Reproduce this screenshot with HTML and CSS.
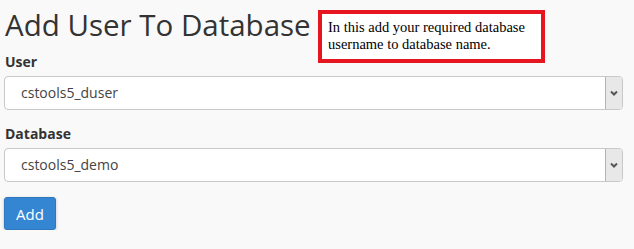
FILE: index.html
```html
<!DOCTYPE html>
<html lang="en">
<head>
  <meta charset="UTF-8">
  <title>Add User To Database</title>
  <link rel="stylesheet" href="styles.css">
</head>
<body>

  <!-- page body -->
  <div class="page">
    <h1>Add User To Database</h1>

    <!-- annotation over the screenshot -->
    <div class="note">
      In this add your required database<br>
      username to database name.
    </div>

    <label class="field-label">User</label>
    <div class="select">
      <span class="select-value">cstools5_duser</span>
      <span class="select-btn">
        <svg width="8" height="6" viewBox="0 0 8 6"><path d="M1 1.5 L4 4.5 L7 1.5" fill="none" stroke="#555" stroke-width="2"/></svg>
      </span>
    </div>

    <label class="field-label">Database</label>
    <div class="select">
      <span class="select-value">cstools5_demo</span>
      <span class="select-btn">
        <svg width="8" height="6" viewBox="0 0 8 6"><path d="M1 1.5 L4 4.5 L7 1.5" fill="none" stroke="#555" stroke-width="2"/></svg>
      </span>
    </div>

    <button class="btn-add">Add</button>
  </div>

</body>
</html>
```

FILE: styles.css
```css
body {
  margin: 0;
  background-color: #f9f9f9;
  font-family: "Open Sans", sans-serif;
  color: #333;
}

.page {
  position: relative;
  padding: 4px 11px 0 4px;
}

h1 {
  margin: 0;
  font-size: 29.5px;
  font-weight: normal;
  line-height: 42px;
  padding-left: 1px;
}

/* red annotation box */
.note {
  position: absolute;
  left: 318px;
  top: 10px;
  padding: 5px 16px 6px 6px;
  border: 4px solid #e5161f;
  background-color: #fff;
  font-family: "Liberation Serif", serif;
  font-size: 14.5px;
  line-height: 17px;
  white-space: nowrap;
  color: #000;
}

.field-label {
  display: block;
  font-size: 14px;
  font-weight: bold;
  line-height: 20px;
  margin: 6px 0 4px 1px;
}

.select + .field-label {
  margin-top: 14px;
}

.select {
  display: flex;
  height: 34px;
  box-sizing: border-box;
  border: 1px solid #c8c8c8;
  border-radius: 4px;
  background-color: #fff;
}

.select-value {
  flex: 1;
  padding-left: 16px;
  font-size: 14px;
  line-height: 32px;
  color: #444;
}

.select-btn {
  width: 16px;
  display: flex;
  align-items: center;
  justify-content: center;
  background-color: #e8e8e8;
  border-left: 1px solid #b4b4b4;
  border-radius: 0 3px 3px 0;
}

.btn-add {
  margin-top: 15px;
  width: 52px;
  height: 33px;
  border: 1px solid #2f78c0;
  border-radius: 3px;
  background-color: #3486d3;
  color: #fff;
  font-family: "Open Sans", sans-serif;
  font-size: 15px;
  box-shadow: 0 1px 3px rgba(0,0,0,0.25);
  cursor: pointer;
}
```
